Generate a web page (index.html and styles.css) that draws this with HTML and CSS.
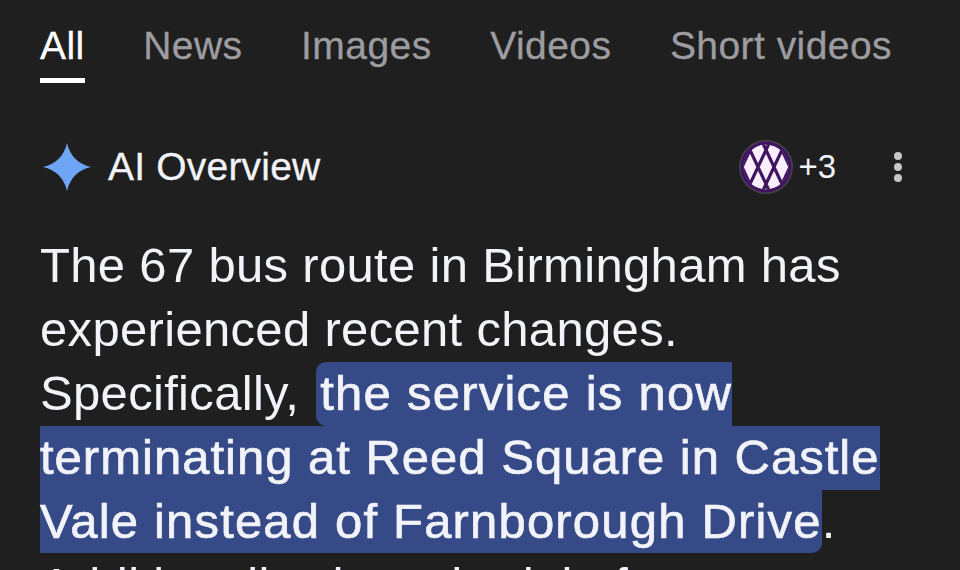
FILE: index.html
```html
<!DOCTYPE html>
<html lang="en">
<head>
    <meta charset="UTF-8">
    <meta name="viewport" content="width=device-width, initial-scale=1.0">
    <title>AI Overview</title>
    <link rel="stylesheet" href="styles.css">
</head>
<body>
    <nav class="tabs">
        <a class="tab active">All</a>
        <a class="tab">News</a>
        <a class="tab">Images</a>
        <a class="tab">Videos</a>
        <a class="tab">Short videos</a>
    </nav>

    <div class="overview-head">
        <svg class="spark" viewBox="0 0 48 48" width="48" height="48">
            <path d="M24 0C27 13 35 21 48 24C35 27 27 35 24 48C21 35 13 27 0 24C13 21 21 13 24 0Z" fill="#6ea6f5"/>
        </svg>
        <span class="overview-title">AI Overview</span>
        <svg class="source-logo" viewBox="0 0 54 54" width="54" height="54">
            <clipPath id="logoClip"><circle cx="27" cy="27" r="22.500"/></clipPath>
            <circle cx="27" cy="27" r="27" fill="#47434d"/>
            <circle cx="27" cy="27" r="25.500" fill="#40155f"/>
            <g clip-path="url(#logoClip)">
                <circle cx="27" cy="27" r="22.500" fill="#fbeefc"/>
                <path d="M33.100 -3L4.900 57M17.100 -3L-11.100 57M49.100 -3L20.900 57M65 -3L37 57M20.900 -3L49.100 57M4.900 -3L33.100 57M36.900 -3L65.100 57M-11 -3L17 57" fill="none" stroke="#40155f" stroke-width="3.200"/>
            </g>
        </svg>
        <span class="source-count">+3</span>
        <span class="more"><i></i><i></i><i></i></span>
    </div>

    <p class="answer">The 67 bus route in Birmingham has experienced recent changes. Specifically, <span class="hl hl-first">the service is now</span> <span class="hl hl-mid">terminating at Reed Square in Castle</span> <span class="hl hl-last">Vale instead of Farnborough Drive</span>. Additionally, the schedule for</p>
</body>
</html>
```

FILE: styles.css
```css
html, body {
    height: 100%;
}
body {
    margin: 0;
    padding: 0 40px;
    background-color: #1f1f1f;
    color: #f1f3f8;
    font-family: "Liberation Sans", Arial, sans-serif;
    overflow: hidden;
}
.tabs {
    display: flex;
    gap: 58.5px;
    height: 84px;
    font-size: 39px;
    letter-spacing: 0.45px;
    color: #9c9ca1;
    -webkit-text-stroke: 0.3px;
}
.tab {
    padding-top: 24px;
    height: 54px;
}
.tab.active {
    color: #fff;
    border-bottom: 5px solid #fff;
}
.overview-head {
    display: flex;
    align-items: center;
    margin-top: 56px;
    height: 54px;
}
.spark {
    margin-left: 3px;
}
.overview-title {
    margin-left: 17px;
    font-size: 39px;
    letter-spacing: 0.2px;
    -webkit-text-stroke: 0.3px;
}
.source-logo {
    margin-left: auto;
}
.source-count {
    margin-left: 5px;
    font-size: 33px;
}
.more {
    display: flex;
    flex-direction: column;
    gap: 3px;
    margin-left: 58px;
    margin-right: 18px;
}
.more i {
    width: 8px;
    height: 8px;
    border-radius: 50%;
    background-color: #c4c7c5;
}
.answer {
    margin: 39px -10px 0 0;
    font-size: 49px;
    letter-spacing: 0.32px;
    line-height: 64px;
}
.hl {
    padding: 4px 0 6px;
    background-color: #374a88;
    -webkit-text-stroke: 0.7px;
}
.hl-first {
    margin-left: 3px;
    padding-left: 4px;
    letter-spacing: 1.25px;
    border-radius: 10px 0 0 10px;
}
.hl-mid {
    letter-spacing: 1px;
}
.hl-last {
    padding-bottom: 5px;
    letter-spacing: 1.18px;
    border-radius: 0 0 10px 0;
}
```
